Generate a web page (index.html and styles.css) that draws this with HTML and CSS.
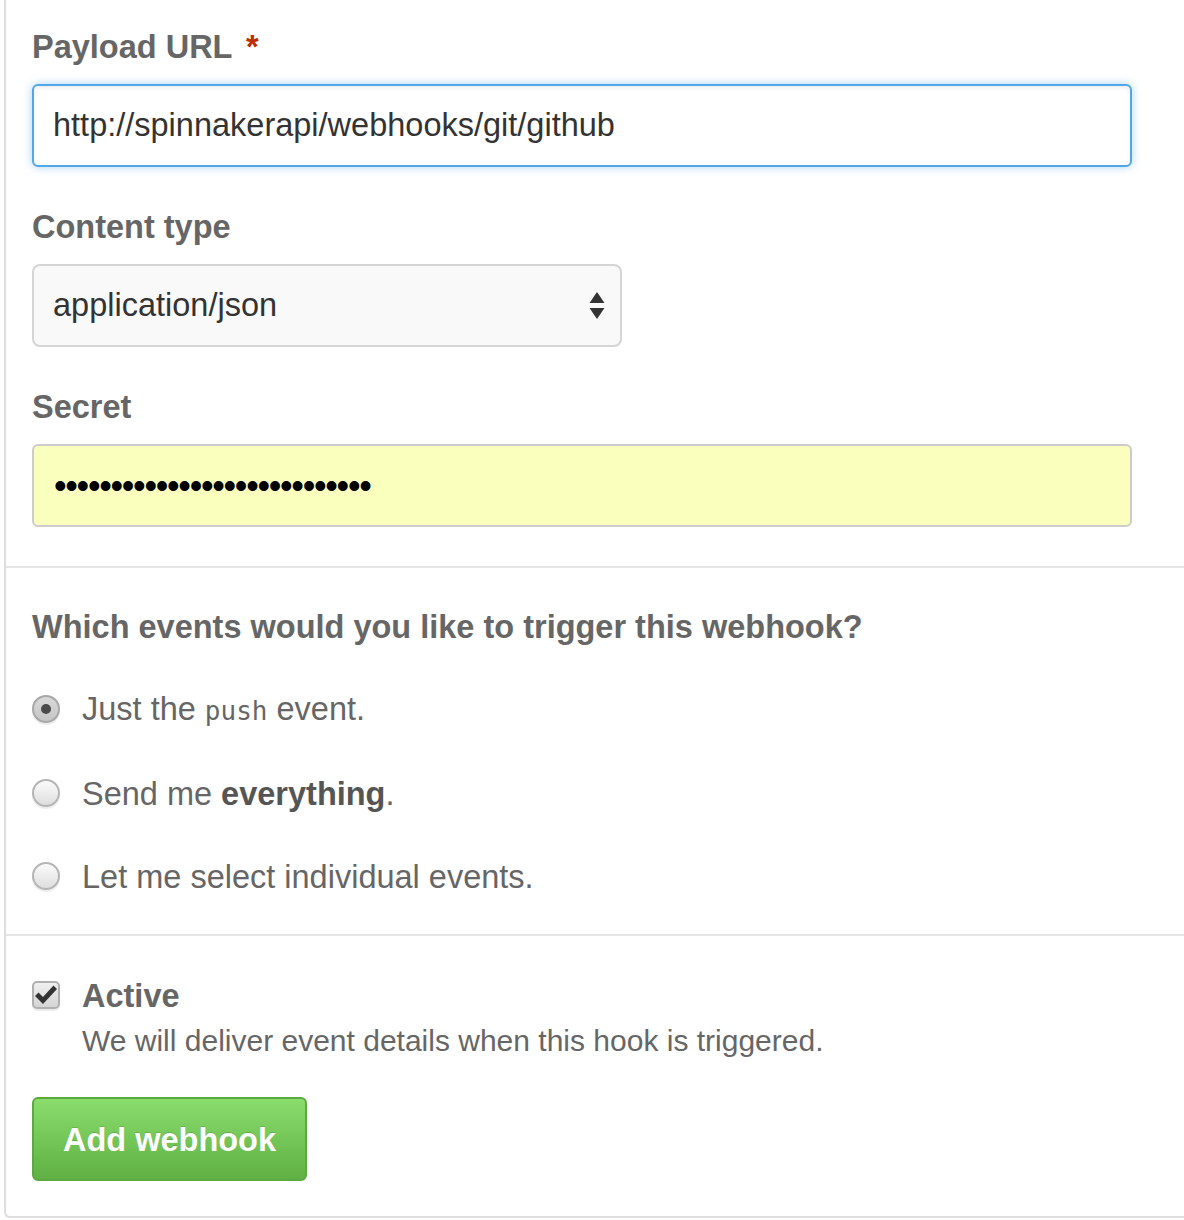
FILE: index.html
```html
<!DOCTYPE html>
<html>
<head>
<meta charset="utf-8">
<link rel="stylesheet" href="styles.css">
</head>
<body>
<div class="box">
  <div class="section">
    <div class="group">
      <div class="label">Payload URL <span class="req">*</span></div>
      <div class="field field-focus">http://spinnakerapi/webhooks/git/github</div>
    </div>
    <div class="group">
      <div class="label">Content type</div>
      <div class="field select">
        <span>application/json</span>
        <svg class="arrows" width="16" height="28" viewBox="0 0 16 28"><path d="M8 0 L15.5 11 L0.5 11 Z" fill="#333"/><path d="M0.5 16 L15.5 16 L8 27 Z" fill="#333"/></svg>
      </div>
    </div>
    <div class="group last">
      <div class="label">Secret</div>
      <div class="field secret">••••••••••••••••••••••••••••</div>
    </div>
  </div>
  <div class="section events">
    <div class="heading">Which events would you like to trigger this webhook?</div>
    <div class="radio-row"><span class="radio checked"></span><span class="rtext">Just the <code>push</code> event.</span></div>
    <div class="radio-row"><span class="radio"></span><span class="rtext">Send me <strong>everything</strong>.</span></div>
    <div class="radio-row"><span class="radio"></span><span class="rtext">Let me select individual events.</span></div>
  </div>
  <div class="section active-sec">
    <div class="check-row">
      <span class="checkbox"><svg width="24" height="22" viewBox="0 0 24 22"><path d="M1 12 L4.5 8.5 L9 13 L19.5 1.5 L23 5 L9 20 Z" fill="#333"/></svg></span>
      <span class="active-label">Active</span>
    </div>
    <div class="note">We will deliver event details when this hook is triggered.</div>
    <div class="btn">Add webhook</div>
  </div>
</div>
</body>
</html>
```
FILE: styles.css
```css
html, body {
  margin: 0;
  padding: 0;
  background: #fff;
  overflow: hidden;
}
body {
  font-family: "Liberation Sans", Arial, Helvetica, sans-serif;
  color: #666;
}
.box {
  margin-left: 4px;
  width: 1200px;
  border-left: 2px solid #ddd;
  border-bottom: 2px solid #ddd;
  border-bottom-left-radius: 6px;
}
.section {
  padding: 27px 0 39px 26px;
  border-bottom: 2px solid #e5e5e5;
}
.group {
  margin-bottom: 40px;
}
.group.last {
  margin-bottom: 0;
}
.label {
  font-size: 32.5px;
  line-height: 40px;
  font-weight: bold;
  color: #666;
  margin-bottom: 17px;
}
.req {
  color: #bd2c00;
  margin-left: 5px;
}
.field {
  box-sizing: border-box;
  width: 1100px;
  height: 83px;
  border: 2px solid #ccc;
  border-radius: 6px;
  padding-left: 19px;
  display: flex;
  align-items: center;
  font-size: 32.5px;
  color: #333;
  background: #fff;
}
.field-focus {
  border-color: #51a7e8;
  box-shadow: inset 0 2px 4px rgba(0,0,0,0.075), 0 0 8px rgba(81,167,232,0.5);
}
.select {
  width: 590px;
  background: #f9f9f9;
  border-color: #d5d5d5;
  border-radius: 8px;
  justify-content: space-between;
  padding-right: 15px;
}
.arrows {
  display: block;
}
.secret {
  background: #faffbd;
  color: #000;
  padding-left: 20px;
  font-size: 36px;
  letter-spacing: -1.3px;
}
.events {
  padding-top: 39px;
  padding-bottom: 37px;
}
.heading {
  font-size: 32.5px;
  line-height: 40px;
  font-weight: bold;
  color: #666;
  margin-bottom: 42px;
}
.radio-row {
  display: flex;
  align-items: center;
  margin-bottom: 43px;
}
.radio-row:last-child {
  margin-bottom: 0;
}
.radio {
  box-sizing: border-box;
  width: 28px;
  height: 28px;
  border-radius: 50%;
  border: 2px solid #b5b5b5;
  background: linear-gradient(#fbfbfb, #dedede);
  box-shadow: 0 2px 1px rgba(0,0,0,0.08);
  margin-right: 22px;
  margin-top: -3px;
  position: relative;
  flex: none;
}
.radio.checked {
  background: linear-gradient(#d8d8d8, #c6c6c6);
  border-color: #a8a8a8;
}
.radio.checked::after {
  content: "";
  position: absolute;
  left: 7px;
  top: 7px;
  width: 10px;
  height: 10px;
  border-radius: 50%;
  background: #4a4a4a;
}
.rtext {
  font-size: 32.5px;
  line-height: 40px;
  color: #666;
}
.rtext strong {
  color: #555;
}
code {
  font-family: "DejaVu Sans Mono", "Liberation Mono", monospace;
  font-size: 26px;
  color: #666;
}
.active-sec {
  padding-top: 40px;
  padding-bottom: 35px;
  border-bottom: none;
}
.check-row {
  display: flex;
  align-items: center;
}
.checkbox {
  box-sizing: border-box;
  width: 28px;
  height: 28px;
  border: 2px solid #b0b0b0;
  border-radius: 5px;
  background: linear-gradient(#f0f0f0, #d4d4d4);
  box-shadow: 0 2px 1px rgba(0,0,0,0.08);
  margin-right: 22px;
  margin-top: -3px;
  display: flex;
  align-items: center;
  justify-content: center;
  flex: none;
}
.checkbox svg {
  display: block;
}
.active-label {
  font-size: 32.5px;
  line-height: 40px;
  font-weight: bold;
  color: #666;
}
.note {
  margin-left: 50px;
  margin-top: 6px;
  font-size: 30px;
  line-height: 38px;
  color: #666;
}
.btn {
  box-sizing: border-box;
  margin-top: 37px;
  width: 275px;
  height: 84px;
  padding-top: 2px;
  border: 2px solid #5ca941;
  border-radius: 6px;
  background: linear-gradient(#8add6d, #60b044);
  color: #fff;
  font-size: 32.5px;
  font-weight: bold;
  display: flex;
  align-items: center;
  justify-content: center;
  text-shadow: 0 -1px 0 rgba(0,0,0,0.15);
}
```
